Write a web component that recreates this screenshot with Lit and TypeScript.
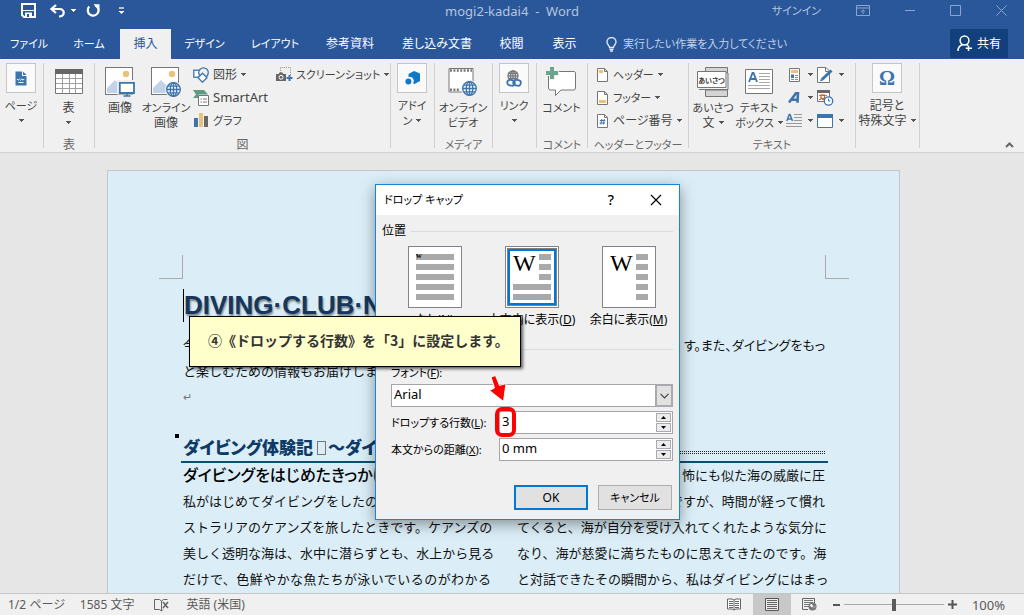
import { LitElement, html, css, svg, nothing } from "lit";
import { customElement } from "lit/decorators.js";

const globe = (x: number, y: number, r: number, color: string) => svg`
  <g fill="#f6f9fc" stroke=${color} stroke-width="1.3">
    <circle cx=${x} cy=${y} r=${r}></circle>
    <g fill="none">
      <ellipse cx=${x} cy=${y} rx=${r * 0.48} ry=${r}></ellipse>
      <path d=${`M${x - r} ${y}H${x + r}M${x} ${y - r}V${y + r}M${x - r * 0.85} ${y - r * 0.5}H${x + r * 0.85}M${x - r * 0.85} ${y + r * 0.5}H${x + r * 0.85}`}></path>
    </g>
  </g>`;

const picture = svg`
  <rect x=".5" y=".5" width="27" height="27" fill="#fff" stroke="#767676"></rect>
  <circle cx="21" cy="7" r="3.2" fill="#ebc27c"></circle>
  <path d="M2 26V21L10 13L19 22V26Z" fill="#c0d3e8"></path>`;

const lines = (x: number, y: number, w: number, n: number, step: number, color: string) =>
  svg`<path fill="none" stroke=${color} d=${Array.from({ length: n }, (_, i) => `M${x} ${y + i * step}h${w}`).join("")}></path>`;

const icons: Record<string, [number, number, unknown]> = {
  save: [15, 15, svg`<path d="M1 1H14V14H3L1 12Z" fill="none" stroke="#fff" stroke-width="2"></path><path d="M2 7.5H13" stroke="#fff"></path><path d="M4 14V9.5H11V14" fill="#fff"></path><path d="M6 11H8V14H6Z" fill="#2a579a"></path>`],
  undo: [16, 14, svg`<path d="M6 1L1.5 5L6 9M2 5H9.5C15.5 5 15 12.5 9 12.5" fill="none" stroke="#fff" stroke-width="2.2"></path>`],
  redo: [15, 15, svg`<path d="M9 2.2A5.4 5.4 0 1 1 3.2 3.6" fill="none" stroke="#fff" stroke-width="2.2"></path><path d="M7.5 1.2H13.5V7.2Z" fill="#fff"></path>`],
  custom: [7, 8, svg`<path d="M1 1H6" stroke="#fff" stroke-width="1.3"></path><path d="M.5 4H6.5L3.5 7Z" fill="#fff"></path>`],
  ribbonOpt: [14, 11, svg`<path d="M.5 .5H13.5V10.5H.5ZM.5 3H13.5M7 9V5M5 6.8L7 4.8L9 6.8" fill="none" stroke="#8aa5cc"></path>`],
  min: [10, 11, svg`<path d="M0 5.5H10" stroke="#8aa5cc"></path>`],
  max: [11, 11, svg`<path d="M.5 .5H10.5V10.5H.5Z" fill="none" stroke="#8aa5cc"></path>`],
  close: [11, 11, svg`<path d="M.5 .5L10.5 10.5M10.5 .5L.5 10.5" stroke="#8aa5cc"></path>`],
  bulb: [11, 15, svg`<path d="M3.5 10.5C3.5 8.5 1 7.8 1 5A4.5 4.5 0 0 1 10 5C10 7.8 7.5 8.5 7.5 10.5ZM3.5 12.3H7.5M4 14H7" fill="none" stroke="#e4ebf5" stroke-width="1.3"></path>`],
  person: [16, 17, svg`<circle cx="7.5" cy="5.5" r="4.4" fill="none" stroke="#fff" stroke-width="1.5"></circle><path d="M1 16C1 12.5 3 10.5 5.5 9.5M9.5 9.5L11 10.3M11.5 10.5V16M8.8 13.3H15" fill="none" stroke="#fff" stroke-width="1.5"></path>`],
  page: [12, 15, svg`<path d="M.5 .5H7V5H11.5V14.5H.5Z" fill="#3e74ae"></path><path d="M8 .5L11.5 4H8Z" fill="#3e74ae"></path><path d="M2 8L3.2 9.2L4.4 8L5.6 9.2L6.8 8L8 9.2L9.2 8M3.5 11.5H8.5" fill="none" stroke="#fff"></path>`],
  table: [28, 25, svg`<path d="M.5 .5H27.5V24.5H.5Z" fill="#fff" stroke="#767676"></path><path d="M0 0H28V5H0Z" fill="#666"></path><path d="M1 9.5H27M1 14.5H27M1 19.5H27M7.5 5V24M14.5 5V24M20.5 5V24" stroke="#a0a0a0"></path>`],
  picture: [30, 30, svg`${picture}<path d="M13.5 14.5H29.5V26H13.5Z" fill="#f2f6fa" stroke="#f0f0f0" stroke-width="3"></path><path d="M14.8 15.8H29V26H14.8Z" fill="#fff" stroke="#3e74ae" stroke-width="1.8"></path><path d="M18.5 29H25.5M22 26V29" stroke="#3e74ae" stroke-width="1.5"></path>`],
  online: [30, 30, svg`${picture}<circle cx="22.5" cy="22.5" r="8.4" fill="#f0f0f0"></circle>${globe(22.5, 22.5, 6.8, "#3e74ae")}`],
  shapes: [16, 16, svg`<rect x=".8" y="3.2" width="9" height="7" fill="#fff" stroke="#3e74ae" stroke-width="1.3"></rect><circle cx="10.5" cy="5.6" r="4.8" fill="#f0f0f0" stroke="#3e74ae" stroke-width="1.3"></circle><path d="M9.5 6.2L14 10.7L9.5 15.2L5 10.7Z" fill="#fff" stroke="#3e74ae" stroke-width="1.3"></path>`],
  smartart: [16, 16, svg`<path d="M0 0H11L15 4.5H5.5V8H0L3 4.5Z" fill="#5f9b82"></path><path d="M5.5 5.5H15.5V15.5H5.5Z" fill="#fff" stroke="#767676"></path><path d="M7.5 9H9M10 9H14M7.5 12H9M10 12H14" stroke="#767676"></path>`],
  chart: [16, 15, svg`<path d="M1 5H5V14H1Z" fill="#3e74ae"></path><path d="M6 0H10V14H6Z" fill="#eac07a"></path><path d="M11 3H15V14H11Z" fill="#666"></path>`],
  shot: [17, 15, svg`<path d="M4.5 6V.5H14.5V8" fill="none" stroke="#888" stroke-dasharray="1 1.2"></path><path d="M0 7H2.5L3.5 5.5H6.5L7.5 7H10V14H0Z" fill="#666"></path><circle cx="5" cy="10.3" r="2" fill="#666" stroke="#fff" stroke-width="1"></circle><path d="M13.5 8V14M10.5 11H16.5" stroke="#3e74ae" stroke-width="2"></path>`],
  addin: [15, 15, svg`<path d="M9 0L15 2.5V10L9.5 13L8 12.2A4 4 0 0 0 3.5 6V3Z" fill="#0f78c8"></path><circle cx="3.4" cy="10.6" r="3" fill="#0f78c8"></circle>`],
  video: [30, 28, svg`<path d="M1 .5H25V24H1Z" fill="#fff" stroke="#767676"></path><path d="M2 2.5H24" stroke="#777" stroke-width="2.4" stroke-dasharray="2 1.4"></path><path d="M2 21.8H12" stroke="#777" stroke-width="2.4" stroke-dasharray="2 1.4"></path><circle cx="21.5" cy="20.5" r="8.4" fill="#f0f0f0"></circle>${globe(21.5, 20.5, 6.8, "#3e74ae")}`],
  link: [16, 17, svg`${globe(7, 5.8, 5, "#767676")}<path d="M0 9H16V17H0Z" fill="#fafafa"></path><rect x="1.2" y="10" width="7.6" height="5.6" rx="2.8" fill="none" stroke="#3e74ae" stroke-width="1.8" transform="rotate(10 5 13)"></rect><rect x="7.2" y="10" width="7.6" height="5.6" rx="2.8" fill="none" stroke="#3e74ae" stroke-width="1.8" transform="rotate(10 11 13)"></rect>`],
  comment: [31, 30, svg`<path d="M4 4.5H27A2 2 0 0 1 29.5 7V21A2 2 0 0 1 27.5 23H15L9.5 28.5V23H4.5A2 2 0 0 1 2.5 21V6Z" fill="#fff" stroke="#767676"></path><path d="M6 0V13M0 6H13" stroke="#f0f0f0" stroke-width="6"></path><path d="M6 0V12M0 6H12" stroke="#6ca58d" stroke-width="4"></path>`],
  header: [11, 14, svg`<path d="M.5 .5H7.5L10.5 3.5V13.5H.5Z" fill="#fff" stroke="#767676"></path><path d="M7.5 .5V3.5H10.5" fill="none" stroke="#767676"></path><path d="M2 2H6V5H2Z" fill="#eac07a"></path>`],
  footer: [11, 14, svg`<path d="M.5 .5H7.5L10.5 3.5V13.5H.5Z" fill="#fff" stroke="#767676"></path><path d="M7.5 .5V3.5H10.5" fill="none" stroke="#767676"></path><path d="M2 9H9V12H2Z" fill="#eac07a"></path>`],
  pageNo: [11, 14, svg`<path d="M.5 .5H7.5L10.5 3.5V13.5H.5Z" fill="#fff" stroke="#767676"></path><path d="M7.5 .5V3.5H10.5" fill="none" stroke="#767676"></path><path d="M4.8 5L3.8 10.5M7.3 5L6.3 10.5M2.8 6.5H8.3M2.5 9H8" stroke="#3e74ae"></path>`],
  greeting: [32, 30, svg`<path d="M8.5 .5H30.5V6H8.5ZM8.5 23H30.5V29.5H8.5Z" fill="#d4d4d4" stroke="#767676"></path><path d="M.5 4.5H29V20.5H.5Z" fill="#fff" stroke="#767676"></path><path d="M2 22.5H31V6" fill="none" stroke="#767676"></path><text x="14.5" y="15.5" text-anchor="middle" font-size="7" font-weight="700" fill="#444">あいさつ</text>`],
  textbox: [28, 25, svg`<path d="M.5 .5H27.5V24.5H.5Z" fill="#fff" stroke="#767676"></path><path d="M4 13L7.5 4H8.5L12 13M5.3 10H10.7" fill="none" stroke="#3e74ae" stroke-width="1.8"></path>${lines(14, 4.5, 11, 4, 3, "#a8a8a8")}${lines(3, 16.5, 22, 2, 3, "#a8a8a8")}`],
  parts: [11, 14, svg`<path d="M.5 .5H10.5V13.5H.5Z" fill="#fff" stroke="#767676"></path><path d="M2 2H9V5H2Z" fill="#eac07a"></path><path d="M2 6.5H5V10H2Z" fill="#3e74ae"></path>${lines(6, 7.5, 3, 3, 2, "#888")}${lines(2, 11.5, 3, 1, 2, "#888")}`],
  wordart: [12, 12, svg`<path d="M1 10.5L8 1.2L10 .8L9.5 10.8M4 7.8H9" fill="none" stroke="#3e74ae" stroke-width="2.6"></path>`],
  dropcap: [16, 16, svg`<path d="M.8 8L3.3 1.5H4L6.5 8M1.8 6H5.5" fill="none" stroke="#3e74ae" stroke-width="1.5"></path>${lines(8, 1.5, 8, 3, 3, "#999")}${lines(0, 10.5, 16, 2, 3, "#999")}`],
  sign: [17, 16, svg`<path d="M.5 .5H9L12.5 4V15.5H.5Z" fill="#fff" stroke="#767676"></path><path d="M8.5 .5V4.5H12" fill="none" stroke="#767676"></path><path d="M5 12.5L14.5 3.5" stroke="#3e74ae" stroke-width="3"></path><path d="M3 14.5L4 11.5L6 13.5Z" fill="#3e74ae"></path>`],
  date: [17, 16, svg`<path d="M.5 1.5H12.5V11.5H.5Z" fill="#fff" stroke="#767676"></path><path d="M0 0H13V3H0Z" fill="#666"></path><path d="M2 5.5H11M2 9.5H11" stroke="#888" stroke-dasharray="2 1"></path><rect x="4" y="5" width="3.5" height="3.5" fill="none" stroke="#d8631f" stroke-width="1.3"></rect><circle cx="11.5" cy="11" r="4.2" fill="#fff" stroke="#3e74ae" stroke-width="1.3"></circle><path d="M11.5 8.5V11H13.5" fill="none" stroke="#3e74ae"></path>`],
  object: [16, 14, svg`<path d="M.5 .5H15.5V13.5H.5Z" fill="#fff" stroke="#3e74ae"></path><path d="M0 0H16V4H0Z" fill="#3e74ae"></path>`],
  up: [9, 6, svg`<path d="M1 5L4.5 1.5L8 5" fill="none" stroke="#666" stroke-width="2"></path>`],
  proof: [15, 14, svg`<path d="M.5 1.5H5.5L7.5 3V13L5.5 11.5H.5ZM7.5 3L9.5 1.5H13.5M7.5 13L9 11.5" fill="none" stroke="#666"></path><path d="M9 4L14 10M14 4L9 10" stroke="#666" stroke-width="1.6"></path>`],
  read: [14, 13, svg`<path d="M.5 1H5L7 2L9 1H13.5V11H9L7 12L5 11H.5ZM7 2V12" fill="#fff" stroke="#666"></path>${lines(2, 3.5, 4, 4, 2, "#666")}${lines(8, 3.5, 4, 4, 2, "#666")}`],
  print: [14, 13, svg`<path d="M.5 .5H13.5V12.5H.5Z" fill="#ececec" stroke="#555"></path>${lines(2, 2.5, 10, 5, 2, "#666")}`],
  web: [15, 13, svg`<path d="M12.5 5V.5H.5V11.5H6" fill="none" stroke="#666"></path>${lines(2, 2.5, 9, 2, 2, "#777")}${lines(2, 6.5, 5, 2, 2, "#777")}<circle cx="10.5" cy="8.5" r="4" fill="#777"></circle><path d="M8 7L10 6.5L11 8.5L9.5 9ZM11.5 10L13.5 8.5" fill="#fff" stroke="#fff" stroke-width=".6"></path>`],
  x: [12, 12, svg`<path d="M1 1L11 11M11 1L1 11" stroke="#000" stroke-width="1.2"></path>`],
};

const icon = (name: string) => {
  const [w, h, body] = icons[name];
  return html`<svg class="icon" width=${w} height=${h} viewBox="0 0 ${w} ${h}" aria-hidden="true">${body}</svg>`;
};

const caret = html`<svg class="caret" width="5" height="3" viewBox="0 0 5 3" aria-hidden="true"><path d="M0 0H5V1H4V2H3V3H2V2H1V1H0Z" fill="currentColor"></path></svg>`;

/* Labels made only of kana are set one size down. */
const label = (text: unknown) =>
  typeof text === "string" && /^[ぁ-ヶー ]+$/.test(text) ? html`<span class="kana">${text}</span>` : text;

const base = css`
  * { box-sizing: border-box; }
  button {
    font: inherit;
    font-feature-settings: inherit;
    color: inherit;
    background: none;
    border: 0;
    padding: 0;
    margin: 0;
  }
  .icon, .caret { display: block; flex: none; }
  .kana { font-size: 11px; }
`;

@customElement("word-ribbon")
class WordRibbon extends LitElement {
  static styles = [base, css`
    :host { display: block; color: #444; }
    .header { background: #2a579a; color: #fff; }
    .titlebar {
      display: grid;
      grid-template-columns: 1fr auto 1fr;
      align-items: center;
      height: 21px;
      margin-bottom: 8px;
      color: #b4c5df;
    }
    .quick { display: flex; align-items: center; padding-left: 21px; }
    .quick .undo { margin-left: 14px; }
    .quick .more { margin: 0 10px 0 5px; }
    .quick .more .caret { color: #fff; }
    .quick .custom { margin-left: 17px; }
    .title { font-size: 13px; line-height: 16px; white-space: pre; }
    .window { display: flex; align-items: center; justify-content: flex-end; padding-right: 17px; gap: 35px; }
    .tabrow { display: flex; align-items: stretch; height: 30px; }
    .tab { flex: none; white-space: nowrap; text-align: center; }
    .tab.active { background: #f0f0f0; color: #2a579a; }
    .w1 { width: 58px; } .w2 { width: 62px; } .w3 { width: 51px; } .w4 { width: 67px; }
    .w5 { width: 74px; } .w6 { width: 76px; } .w7 { width: 98px; } .w9 { width: 55px; }
    .tell { display: flex; align-items: center; gap: 6px; margin-left: 14px; flex: 1; }
    .tell input {
      flex: 1;
      border: 0;
      padding: 0;
      background: none;
      outline: 0;
      font: inherit;
      font-size: 11px;
      font-feature-settings: inherit;
      color: #fff;
    }
    .tell input::placeholder { color: #c3d0e6; opacity: 1; }
    .share {
      display: flex;
      align-items: center;
      justify-content: center;
      gap: 4px;
      width: 58px;
      height: 29px;
      margin-right: 16px;
      background: #12407c;
    }
    .ribbon {
      display: flex;
      background: #f0f0f0;
      border-bottom: 1px solid #d2d2d2;
      height: 94px;
      padding-top: 4px;
    }
    .group {
      flex: none;
      display: flex;
      flex-direction: column;
      height: 85px;
      border-right: 1px solid #d0d0d0;
    }
    .body { display: flex; flex: none; height: 76px; justify-content: center; align-items: flex-start; padding-right: 1px; }
    .body.left { justify-content: flex-start; }
    .name { text-align: center; line-height: 12px; color: #666; white-space: nowrap; }
    .g44 { width: 44px; } .g51 { width: 51px; } .g58 { width: 58px; } .g64 { width: 64px; }
    .g101 { width: 101px; } .g167 { width: 167px; } .g296 { width: 296px; }
    .big {
      display: flex;
      flex: none;
      flex-direction: column;
      align-items: center;
      line-height: 15px;
      white-space: nowrap;
      width: 46px;
    }
    .g44 .big { width: 42px; }
    .big .pic { display: flex; align-items: center; height: 37px; }
    .big .pic.boxed {
      width: 30px;
      height: 30px;
      margin-bottom: 5px;
      justify-content: center;
      background: #fafafa;
      border: 1px solid #c6c6c6;
    }
    .line { display: flex; align-items: center; gap: 4px; height: 15px; }
    .caret { color: #555; }
    .omega { font: 700 20px "Liberation Serif", serif; color: #3e74ae; }
    .stack { display: flex; flex-direction: column; }
    .small { display: flex; align-items: center; gap: 4px; height: 23px; white-space: nowrap; }
    .slot { display: flex; width: 16px; justify-content: center; }
    .narrow .slot { width: 14px; }
    .latin { font-size: 13px; }
    .body.fig { padding-left: 2px; }
    .g296 .stack { margin-left: 4px; }
    .g296 .shot { margin-left: 8px; }
    .body.hf { padding-left: 7px; }
    .body.text { padding-left: 1px; }
    .g167 .stack { margin-left: 4px; }
    .g167 .stack .small { gap: 6px; }
    .collapse { margin: auto 10px 4px auto; }
  `];

  big(pic: unknown, rows: unknown[], boxed = false) {
    return html`<button class="big">
      <span class="pic ${boxed ? "boxed" : ""}">${pic}</span>
      ${rows.map((r) => html`<span class="line">${label(r)}</span>`)}
    </button>`;
  }

  small(name: string, text: unknown, drop = true) {
    return html`<button class="small" aria-label=${text ? nothing : name}>
      <span class="slot">${icon(name)}</span>${text ? html`<span>${label(text)}</span>` : nothing}${drop ? caret : nothing}
    </button>`;
  }

  group(cls: string, body: unknown, name = "", bodyCls = "") {
    return html`<div class="group ${cls}"><div class="body ${bodyCls}">${body}</div><div class="name">${label(name)}</div></div>`;
  }

  render() {
    const tabs = [
      ["ファイル", "w1"], ["ホーム", "w2"], ["挿入", "w3 active"], ["デザイン", "w4"], ["レイアウト", "w5"],
      ["参考資料", "w6"], ["差し込み文書", "w7"], ["校閲", "w3"], ["表示", "w9"],
    ];
    return html`
      <header class="header">
        <div class="titlebar">
          <div class="quick">
            <button aria-label="save">${icon("save")}</button>
            <button class="undo" aria-label="undo">${icon("undo")}</button>
            <span class="more">${caret}</span>
            <button aria-label="redo">${icon("redo")}</button>
            <button class="custom" aria-label="customize">${icon("custom")}</button>
          </div>
          <div class="title">mogi2-kadai4  -  Word</div>
          <div class="window">
            <button>${label("サインイン")}</button>
            ${["ribbonOpt", "min", "max", "close"].map((n) => html`<button aria-label=${n}>${icon(n)}</button>`)}
          </div>
        </div>
        <div class="tabrow">
          ${tabs.map(([t, c]) => html`<button class="tab ${c}">${label(t)}</button>`)}
          <label class="tell">${icon("bulb")}<input aria-label="search" placeholder="実行したい作業を入力してください"></label>
          <button class="share">${icon("person")}共有</button>
        </div>
      </header>
      <div class="ribbon">
        ${this.group("g44", this.big(icon("page"), ["ページ", caret], true))}
        ${this.group("g51", this.big(icon("table"), ["表", caret]), "表")}
        ${this.group("g296", html`
          ${this.big(icon("picture"), ["画像"])}
          ${this.big(icon("online"), ["オンライン", "画像"])}
          <div class="stack">
            ${this.small("shapes", "図形")}
            ${this.small("smartart", html`<span class="latin">SmartArt</span>`, false)}
            ${this.small("chart", "グラフ", false)}
          </div>
          <div class="shot">${this.small("shot", "スクリーンショット")}</div>`, "図", "left fig")}
        ${this.group("g44", this.big(icon("addin"), ["アドイ", html`${label("ン")}${caret}`], true))}
        ${this.group("g58", this.big(icon("video"), ["オンライン", "ビデオ"]), "メディア")}
        ${this.group("g44", this.big(icon("link"), ["リンク", caret], true))}
        ${this.group("g51", this.big(icon("comment"), ["コメント"]), "コメント")}
        ${this.group("g101", html`<div class="stack narrow">
            ${this.small("header", "ヘッダー")}
            ${this.small("footer", "フッター")}
            ${this.small("pageNo", "ページ番号")}
          </div>`, "ヘッダーとフッター", "left hf")}
        ${this.group("g167", html`
          ${this.big(icon("greeting"), ["あいさつ", html`文${caret}`])}
          ${this.big(icon("textbox"), ["テキスト", html`${label("ボックス")}${caret}`])}
          <div class="stack">
            ${this.small("parts", "")}${this.small("wordart", "")}${this.small("dropcap", "")}
          </div>
          <div class="stack">
            ${this.small("sign", "")}${this.small("date", "", false)}${this.small("object", "")}
          </div>`, "テキスト", "left text")}
        ${this.group("g64", this.big(html`<span class="omega">Ω</span>`, ["記号と", html`特殊文字${caret}`], true))}
        <button class="collapse" aria-label="collapse">${icon("up")}</button>
      </div>`;
  }
}

@customElement("word-page")
class WordPage extends LitElement {
  static styles = [base, css`
    :host {
      display: block;
      background: #e6e6e6;
      padding: 17px 17px 0 0;
      overflow: hidden;
      color: #111;
      font-size: 13px;
      line-height: 26px;
    }
    .page {
      width: 793px;
      margin: 0 auto;
      height: 1120px;
      padding: 84px 74px 0 75px;
      background: #dbeef7;
      border: 1px solid #c6c6c6;
    }
    .marks { display: flex; justify-content: space-between; margin: 0 -24px; }
    .mark { width: 24px; height: 24px; border: 0 solid #aaa; border-bottom-width: 1px; }
    .mark.l { border-right-width: 1px; }
    .mark.r { border-left-width: 1px; }
    h1 {
      margin: 10px 0;
      height: 33px;
      border-left: 1px solid #000;
      font: 700 26px/32px "Liberation Sans", Arial, sans-serif;
      color: #16365c;
      text-shadow: 1px 2px 2px rgba(0, 0, 0, 0.45);
      white-space: nowrap;
    }
    .split { display: flex; justify-content: space-between; }
    .full { font-feature-settings: normal; white-space: nowrap; }
    .last { text-align: justify; text-align-last: justify; }
    .pilcrow { color: #777; font-size: 11px; }
    .section {
      display: flex;
      align-items: center;
      margin: 24px -3px 0 -8px;
      height: 27px;
    }
    .bullet { width: 4px; height: 4px; background: #000; align-self: flex-start; margin-right: 4px; }
    h2 {
      margin: 0;
      font-size: 17px;
      line-height: 25px;
      font-weight: 900;
      color: #0d3b66;
      white-space: nowrap;
      display: flex;
      align-items: center;
    }
    .space { width: 9px; height: 14px; border: 1px solid #777; margin: 0 2px 0 4px; }
    .dots {
      flex: 1;
      height: 3px;
      margin: 10px 3px 0 4px;
      border-top: 1px dotted #222;
      border-bottom: 1px dotted #222;
    }
    .rule { height: 2px; background: #0b4f71; margin: 0 -3px 0 -2px; }
    .cols { display: grid; grid-template-columns: repeat(2, minmax(0, 1fr)); column-gap: 26px; margin-top: -1px; }
    h3 { margin: 0; font-size: 16px; line-height: 26px; font-weight: 500; white-space: nowrap; color: #000; }
    p { margin: 0; }
  `];

  render() {
    const left = [
      "ストラリアのケアンズを旅したときです。ケアンズの",
      "美しく透明な海は、水中に潜らずとも、水上から見る",
      "だけで、色鮮やかな魚たちが泳いでいるのがわかる",
    ];
    const right = [
      ["", "怖にも似た海の威厳に圧"],
      ["", "ですが、時間が経って慣れ"],
      ["てくると、海が自分を受け入れてくれたような気分に", ""],
      ["なり、海が慈愛に満ちたものに思えてきたのです。海", ""],
      ["と対話できたその瞬間から、私はダイビングにはまっ", ""],
    ];
    return html`
      <article class="page">
        <div class="marks"><div class="mark l"></div><div class="mark r"></div></div>
        <h1>DIVING·CLUB·NEWS</h1>
        <p class="split"><span>今</span><span>す。また、ダイビングをもっ</span></p>
        <p class="full">と楽しむための情報もお届けします。</p>
        <p class="pilcrow">↵</p>
        <div class="section"><span class="bullet"></span><h2>ダイビング体験記<span class="space"></span>～ダイビング</h2><span class="dots"></span></div>
        <div class="rule"></div>
        <div class="cols">
          <div>
            <h3>ダイビングをはじめたきっかけ</h3>
            <p class="full">私がはじめてダイビングをしたのは、オー</p>
            ${left.map((t) => html`<p class="full last">${t}</p>`)}
          </div>
          <div>
            ${right.map(([a, b]) => (a ? html`<p class="full last">${a}</p>` : html`<p class="split full"><span></span><span>${b}</span></p>`))}
          </div>
        </div>
      </article>`;
  }
}

@customElement("drop-cap-dialog")
class DropCapDialog extends LitElement {
  static styles = [base, css`
    :host {
      display: block;
      width: 305px;
      background: #f0f0f0;
      border: 1px solid #1883d7;
      box-shadow: 0 4px 14px rgba(0, 0, 0, 0.4);
      color: #000;
      line-height: 16px;
      white-space: nowrap;
    }
    .bar { display: flex; align-items: center; height: 30px; padding: 0 17px 0 8px; background: #fff; }
    .bar .caption { flex: 1; }
    .bar .help { font-size: 14px; font-weight: 500; width: 12px; margin-right: 33px; }
    .content { padding: 8px 6px 9px; }
    .legend { display: flex; align-items: center; gap: 5px; height: 16px; }
    .legend::after { content: ""; flex: 1; height: 1px; background: #dcdcdc; }
    .options { display: grid; grid-template-columns: repeat(3, 97px); margin: 7px 0 13px 4px; }
    .option { display: flex; flex-direction: column; align-items: center; gap: 4px; position: relative; }
    .option input { position: absolute; opacity: 0; margin: 0; }
    .thumb { display: block; }
    .form { padding-left: 9px; }
    .flabel { display: block; margin-top: 8px; font-size: 11px; }
    .row label { font-size: 11px; }
    .combo { position: relative; display: block; margin: 3px 0 4px; }
    select, .field input {
      display: block;
      width: 100%;
      height: 23px;
      border: 1px solid #a5a5ab;
      border-radius: 0;
      background: #fff;
      color: #000;
      font: inherit;
      font-size: 13px;
      line-height: 16px;
      padding: 0 3px 3px 2px;
      outline: 0;
      appearance: none;
    }
    .drop {
      position: absolute;
      right: 0;
      top: 0;
      width: 18px;
      height: 23px;
      border: 2px solid #a9a9af;
      background: #e1e1e1;
      display: flex;
      align-items: center;
      justify-content: center;
      pointer-events: none;
    }
    .row { display: grid; grid-template-columns: 1fr 174px; align-items: center; margin-bottom: 4px; }
    .field { position: relative; display: block; }
    .spin { position: absolute; right: 2px; top: 2px; display: flex; flex-direction: column; gap: 1px; }
    .spin button {
      width: 15px;
      height: 9px;
      border: 1px solid #a9a9af;
      background: #ececec;
      display: flex;
      align-items: center;
      justify-content: center;
    }
    .actions { display: flex; justify-content: flex-end; gap: 10px; margin: 24px 1px 0 0; }
    .actions button { width: 74px; height: 25px; background: #e1e1e1; border: 1px solid #adadad; }
    .actions .ok { border: 2px solid #0078d7; }
  `];

  thumb(kind: number) {
    const bars = [8, 18, 28, 38, 48].map((y, i) => {
      const short = kind === 2 || (kind === 1 && i < 3);
      return svg`<rect x=${short ? 34 : 8} y=${y} width=${short ? 12 : 38} height="6" fill="#a9a9a9"></rect>`;
    });
    return html`<svg class="thumb" width="54" height="62" viewBox="0 0 54 62" aria-hidden="true">
      <rect x=".5" y=".5" width="53" height="61" fill="#fff" stroke="#7f838c"></rect>
      ${kind === 1 ? svg`<rect x="2.5" y="2.5" width="49" height="57" fill="none" stroke="#000" stroke-dasharray="1 1"></rect><rect x="4" y="4" width="46" height="54" fill="none" stroke="#0078d7" stroke-width="2"></rect>` : nothing}
      ${bars}
      <text x="8" y=${kind ? 25 : 12} font-family="Liberation Serif" font-size=${kind ? 24 : 8} font-weight=${kind ? 400 : 700} fill="#000">${kind ? "W" : "w"}</text>
    </svg>`;
  }

  spin() {
    return html`<span class="spin">
      <button aria-label="up"><svg class="icon" width="5" height="3"><path d="M0 3H5L2.5 0Z"></path></svg></button>
      <button aria-label="down"><svg class="icon" width="5" height="3"><path d="M0 0H5L2.5 3Z"></path></svg></button>
    </span>`;
  }

  render() {
    const opts = [["なし", "N"], ["本文内に表示", "D"], ["余白に表示", "M"]];
    return html`
      <div class="bar"><span class="caption">${label("ドロップ キャップ")}</span><button class="help">?</button><button aria-label="close">${icon("x")}</button></div>
      <div class="content">
        <div class="legend">位置</div>
        <div class="options">
          ${opts.map(([t, k], i) => html`<label class="option"><input type="radio" name="pos" ?checked=${i === 1}>${this.thumb(i)}<span>${t}(<u>${k}</u>)</span></label>`)}
        </div>
        <div class="legend">オプション</div>
        <div class="form">
          <label class="flabel" for="font">フォント(<u>F</u>):</label>
          <span class="combo">
            <select id="font"><option>Arial</option></select>
            <span class="drop"><svg class="icon" width="9" height="6"><path d="M.5 .8L4.5 4.8L8.5 .8" fill="none" stroke="#444" stroke-width="1.2"></path></svg></span>
          </span>
          <div class="row"><label for="lines">ドロップする行数(<u>L</u>):</label><span class="field"><input id="lines" value="3">${this.spin()}</span></div>
          <div class="row"><label for="dist">本文からの距離(<u>X</u>):</label><span class="field"><input id="dist" value="0 mm">${this.spin()}</span></div>
        </div>
        <div class="actions"><button class="ok">OK</button><button>${label("キャンセル")}</button></div>
      </div>`;
  }
}

@customElement("app-root")
class AppRoot extends LitElement {
  static styles = [base, css`
    :host {
      display: flex;
      flex-direction: column;
      position: relative;
      height: 100vh;
      overflow: hidden;
      font-family: "Noto Sans", "Noto Sans CJK JP", sans-serif;
      font-size: 12px;
      line-height: 16px;
      font-feature-settings: "palt";
    }
    word-page { flex: 1; min-height: 0; }
    drop-cap-dialog { position: absolute; left: 375px; top: 184px; }
    .callout {
      position: absolute;
      left: 189px;
      top: 316px;
      padding: 15px 14px 17px 18px;
      width: 332px;
      background: #ffffcc;
      border: 1px solid #000;
      box-shadow: 2px 2px 3px rgba(0, 0, 0, 0.6);
      font: 700 14px/17px "Noto Sans CJK JP", sans-serif;
      font-feature-settings: normal;
      color: #333;
      white-space: nowrap;
    }
    .arrow { position: absolute; left: 488px; top: 374px; }
    .ring {
      position: absolute;
      left: 495px;
      top: 407px;
      width: 21px;
      height: 30px;
      border: 4px solid #f00;
      border-radius: 7px;
    }
    .status {
      display: flex;
      align-items: center;
      height: 22px;
      background: #f0f0f0;
      border-top: 1px solid #c6c6c6;
      padding: 0 19px 0 8px;
      color: #5a5a5a;
      white-space: nowrap;
    }
    .status .count { margin: 0 20px 0 15px; }
    .status .lang { margin-left: 17px; margin-right: auto; }
    .view { display: flex; align-items: center; justify-content: center; width: 38px; height: 21px; }
    .view.on { background: #c8c8c8; }
    .zoom { display: flex; align-items: center; gap: 4px; margin: 0 15px 0 4px; }
    .bar { width: 7px; height: 2px; background: #555; }
    .plus { width: 9px; height: 9px; }
    .zoom input { appearance: none; width: 100px; height: 13px; margin: 0; background: linear-gradient(#aaa, #aaa) center / 100% 1px no-repeat; }
    .zoom input::-webkit-slider-thumb { appearance: none; width: 4px; height: 12px; background: #5a5a5a; }
    .pct { font-size: 13px; }
  `];

  render() {
    return html`
      <word-ribbon></word-ribbon>
      <word-page></word-page>
      <footer class="status">
        <span>1/2 ページ</span><span class="count">1585 文字</span>${icon("proof")}<span class="lang">英語 (米国)</span>
        <button class="view" aria-label="read">${icon("read")}</button>
        <button class="view on" aria-label="print">${icon("print")}</button>
        <button class="view" aria-label="web">${icon("web")}</button>
        <span class="zoom">
          <button class="bar" aria-label="zoom out"></button>
          <input type="range" min="0" max="100" value="50" aria-label="zoom">
          <button class="plus" aria-label="zoom in"><svg class="icon" width="9" height="9"><path d="M4.5 0V9M0 4.5H9" stroke="#555" stroke-width="2"></path></svg></button>
        </span>
        <span class="pct">100%</span>
      </footer>
      <drop-cap-dialog></drop-cap-dialog>
      <div class="callout">④《ドロップする行数》を「3」に設定します。</div>
      <svg class="arrow" width="20" height="30" viewBox="0 0 20 30" aria-hidden="true">
        <path d="M3 3L7.5 1.5L11.5 11.5L18 9.5L15.5 27.5L1.5 16.5L6.5 14Z" fill="#f00" stroke="#fff"></path>
      </svg>
      <div class="ring"></div>`;
  }
}
